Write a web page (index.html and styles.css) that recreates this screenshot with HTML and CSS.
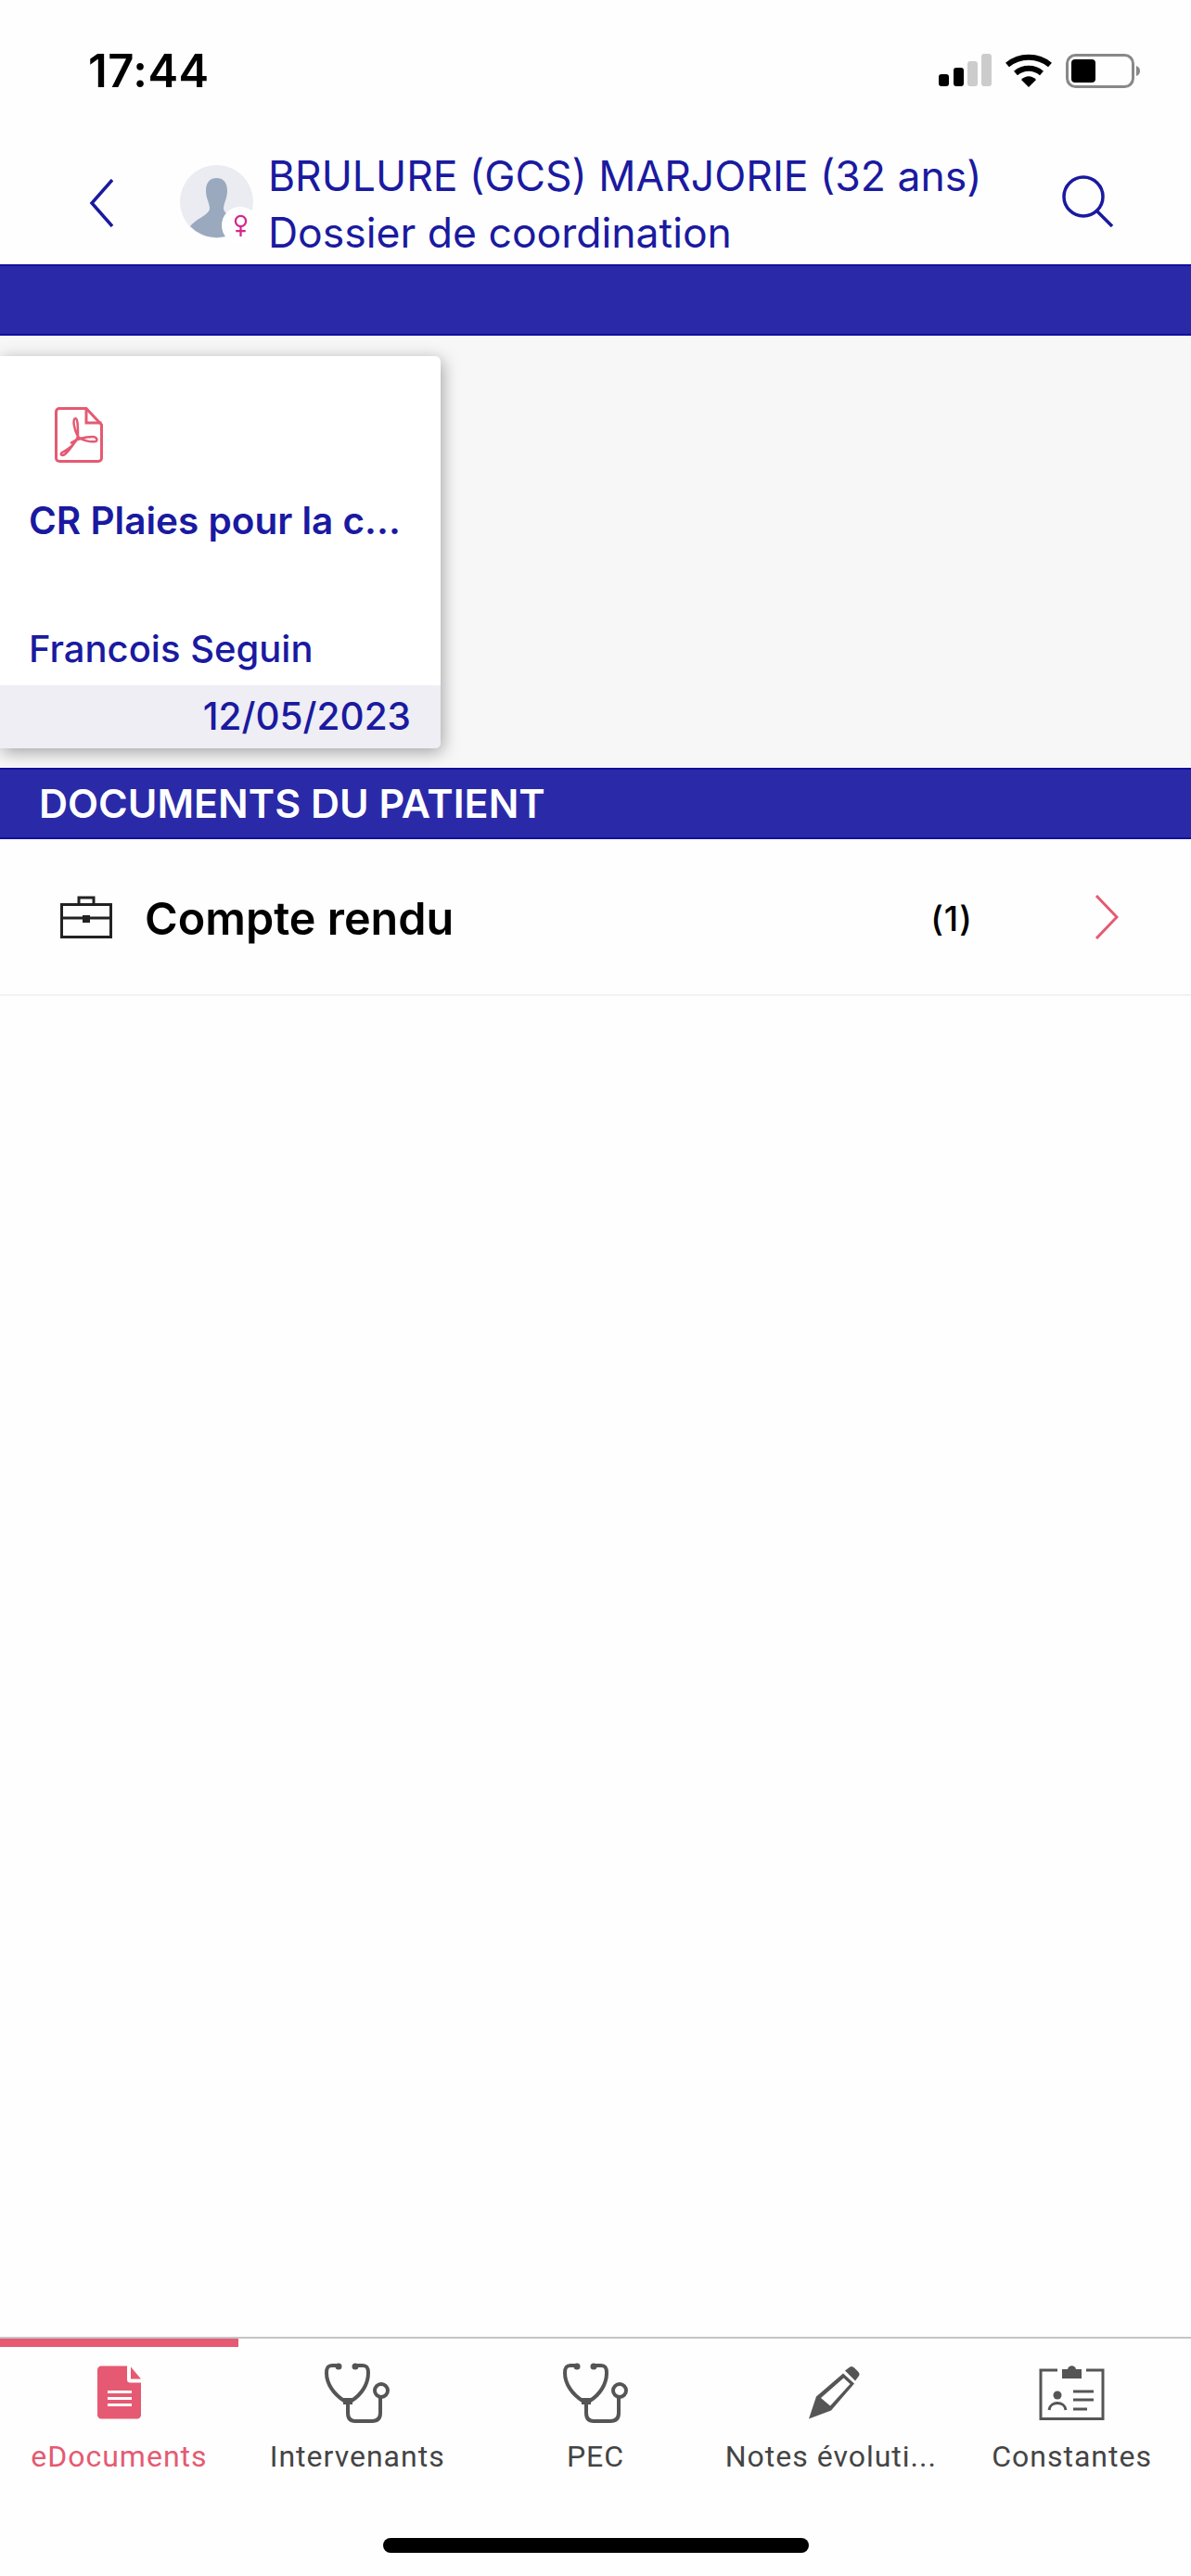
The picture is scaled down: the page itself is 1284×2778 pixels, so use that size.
FILE: index.html
```html
<!DOCTYPE html>
<html lang="fr">
<head>
  <meta charset="UTF-8">
  <title>Dossier de coordination</title>
  <meta name="viewport" content="width=device-width, initial-scale=1">
  <link rel="stylesheet" href="styles.css">
</head>
<body>

<div class="status-bar">
  <span class="time">17:44</span>
  <div class="status-icons">
    <svg class="signal" width="57" height="35" viewBox="0 0 57 35">
      <rect x="0" y="22" width="11" height="13" rx="3" fill="#000"/>
      <rect x="16" y="15" width="11" height="20" rx="3" fill="#000"/>
      <rect x="31" y="8" width="11" height="27" rx="3" fill="#ccc"/>
      <rect x="46" y="0" width="11" height="35" rx="3" fill="#ccc"/>
    </svg>
    <svg class="wifi" width="50" height="36" viewBox="0 0 50 36">
      <path d="M2 12 C15 1 35 1 48 12 M11 21 C19 14 31 14 39 21" fill="none" stroke="#000" stroke-width="6"/>
      <path d="M17 28 C22 23 28 23 33 28 L25 36 Z" fill="#000"/>
    </svg>
    <svg class="battery" width="80" height="37" viewBox="0 0 80 37">
      <rect x="1.500" y="1.500" width="71" height="34" rx="9" fill="none" stroke="#888" stroke-width="3"/>
      <rect x="6" y="6" width="26" height="25" rx="4" fill="#000"/>
      <path d="M76 13 C79 14 80 16 80 18.500 C80 21 79 23 76 24 Z" fill="#888"/>
    </svg>
  </div>
</div>

<header class="top-bar">
  <svg class="back" width="27" height="52" viewBox="0 0 27 52">
    <path d="M25 1 L3 26 L25 51" fill="none" stroke="#1a1aa0" stroke-width="3.500"/>
  </svg>
  <div class="avatar">
    <svg width="79" height="79" viewBox="0 0 79 79">
      <circle cx="39.500" cy="39.500" r="39.500" fill="#ebebf2"/>
      <path d="M28 28 C28 18 33 14 39.500 14 C46 14 51 18 51 28 C51 36 47 41 47 47 C48 54 59 56 68 66 A39.500 39.500 0 0 1 11 66 C20 56 31 54 32 47 C32 41 28 36 28 28 Z" fill="#9aa9bd"/>
    </svg>
    <span class="gender-badge">
      <svg width="15" height="24" viewBox="0 0 20 32">
        <circle cx="10" cy="10" r="7.500" fill="none" stroke="#d6278a" stroke-width="3"/>
        <path d="M10 17 V32 M3 24 H17" fill="none" stroke="#d6278a" stroke-width="3"/>
      </svg>
    </span>
  </div>
  <div class="patient">
    <div class="patient-name">BRULURE (GCS) MARJORIE (32 ans)</div>
    <div class="patient-sub">Dossier de coordination</div>
  </div>
  <svg class="search" width="56" height="56" viewBox="0 0 56 56">
    <circle cx="23" cy="23" r="21" fill="none" stroke="#1a1aa0" stroke-width="3.500"/>
    <path d="M37 38 L54 55" fill="none" stroke="#1a1aa0" stroke-width="3.500"/>
  </svg>
</header>

<div class="band band-empty"></div>

<section class="recent">
  <div class="doc-card">
    <div class="doc-body">
      <svg class="pdf-icon" width="52" height="60" viewBox="0 0 52 60">
        <path d="M5 1.500 H34 L50.500 19 V55 C50.500 57 49 58.500 47 58.500 H5 C3 58.500 1.500 57 1.500 55 V5 C1.500 3 3 1.500 5 1.500 Z" fill="none" stroke="#e55a72" stroke-width="3"/>
        <path d="M34 1.500 V17 H50.500" fill="none" stroke="#e55a72" stroke-width="3"/>
        <path d="M22 12 C19 14 21 24 25 32 C22 40 14 46 8 49 C5 51 8 54 12 50 C16 46 22 38 25 32 C30 36 38 38 44 37 C47 36 45 32 41 32 C36 32 26 33 17 39 M22 12 C25 12 25 20 25 32" fill="none" stroke="#e55a72" stroke-width="2.500"/>
      </svg>
      <div class="doc-title">CR Plaies pour la c...</div>
      <div class="doc-author">Francois Seguin</div>
    </div>
    <div class="doc-date">12/05/2023</div>
  </div>
</section>

<div class="band band-title">DOCUMENTS DU PATIENT</div>

<main class="doc-list">
  <div class="doc-row">
    <svg class="case-icon" width="56" height="46" viewBox="0 0 56 46">
      <path d="M20 9 V2 H36 V9" fill="none" stroke="#222" stroke-width="3"/>
      <rect x="1.500" y="9.500" width="53" height="35" fill="none" stroke="#222" stroke-width="3"/>
      <path d="M1.500 24 H54.500" fill="none" stroke="#222" stroke-width="3"/>
      <rect x="24" y="21" width="8" height="8" fill="#222"/>
    </svg>
    <span class="row-label">Compte rendu</span>
    <span class="row-count">(1)</span>
    <svg class="row-chevron" width="26" height="48" viewBox="0 0 26 48">
      <path d="M2 1 L24 24 L2 47" fill="none" stroke="#e55a72" stroke-width="3"/>
    </svg>
  </div>
</main>

<nav class="tab-bar">
  <div class="tab active">
    <svg width="47" height="57" viewBox="0 0 47 57">
      <path d="M4 0 H32 V14 C32 17 33 18 36 18 H47 V53 C47 55 45 57 43 57 H4 C2 57 0 55 0 53 V4 C0 2 2 0 4 0 Z" fill="#e55a72"/>
      <path d="M36 1 L47 14 H36 Z" fill="#e55a72"/>
      <path d="M11 28 H37 M11 35 H37 M11 42 H37" stroke="#fff" stroke-width="3"/>
    </svg>
    <span class="tab-label">eDocuments</span>
  </div>
  <div class="tab">
    <svg width="70" height="66" viewBox="0 0 70 66">
      <use href="#steth"/>
    </svg>
    <span class="tab-label">Intervenants</span>
  </div>
  <div class="tab">
    <svg width="70" height="66" viewBox="0 0 70 66">
      <use href="#steth"/>
    </svg>
    <span class="tab-label">PEC</span>
  </div>
  <div class="tab">
    <svg width="56" height="57" viewBox="0 0 56 57">
      <path d="M44 2 C46 0 48 0 50 2 L54 6 C56 8 56 10 54 12 L51 16 L40 5 Z" fill="#555"/>
      <path d="M38 8 L50 19 L25 48 L1 57 L9 33 Z" fill="#555"/>
      <path d="M38.500 13 L45.500 19.500 L24 43 L14 34.500 Z" fill="#fff"/>
    </svg>
    <span class="tab-label tab-label-cut">Notes évoluti...</span>
  </div>
  <div class="tab">
    <svg width="71" height="62" viewBox="0 0 71 62">
      <path d="M20 7 H2 V59.500 H69 V7 H51" fill="none" stroke="#555" stroke-width="3"/>
      <path d="M25 16 V6 H31 C32 1 39 1 40 6 H46 V16 Z" fill="#555"/>
      <circle cx="20" cy="34" r="4.500" fill="#555"/>
      <path d="M11 50 C12 40 28 40 29 50" fill="none" stroke="#555" stroke-width="3"/>
      <path d="M37 30 H59 M37 39 H59 M37 49 H52" stroke="#555" stroke-width="3"/>
    </svg>
    <span class="tab-label">Constantes</span>
  </div>
</nav>

<div class="home-area">
  <div class="home-indicator"></div>
</div>

<svg class="defs" width="0" height="0">
  <defs>
    <g id="steth" fill="none" stroke="#555" stroke-width="4">
      <path d="M14 4 H8 C3 4 2 7 2 12 C2 24 10 35 21 42 H29 C40 35 47 24 47 12 C47 7 46 4 41 4 H34"/>
      <circle cx="15" cy="5" r="3.500" fill="#555" stroke="none"/>
      <circle cx="33" cy="5" r="3.500" fill="#555" stroke="none"/>
      <path d="M25 42 V55 C25 61 28 64 33 64 H51 C57 64 60 61 60 55 V38"/>
      <circle cx="61" cy="31" r="7"/>
      <rect x="20" y="39" width="10" height="7" fill="#555" stroke="none"/>
    </g>
  </defs>
</svg>

</body>
</html>
```

FILE: styles.css
```css
* {
  box-sizing: border-box;
  margin: 0;
  padding: 0;
}

body {
  font-family: 'Inter', sans-serif;
  background: #fefefe;
  width: 1284px;
  height: 2778px;
  display: flex;
  flex-direction: column;
  overflow: hidden;
  color: #1a1aa0;
}

.status-bar {
  height: 146px;
  display: flex;
  justify-content: space-between;
  align-items: flex-start;
  padding: 51px 55px 0 95px;
}

.time {
  font-size: 49px;
  font-weight: 600;
  line-height: 52px;
  letter-spacing: 0.5px;
  color: #000;
}

.status-icons {
  display: flex;
  align-items: flex-start;
  padding-top: 7px;
  gap: 15px;
}

.top-bar {
  height: 139px;
  display: flex;
  align-items: flex-start;
  position: relative;
  padding-left: 96px;
}

.back {
  margin-top: 47px;
}

.avatar {
  position: relative;
  width: 79px;
  height: 79px;
  margin: 32px 16px 0 71px;
}

.gender-badge {
  position: absolute;
  left: 45px;
  top: 45px;
  width: 40px;
  height: 40px;
  border-radius: 50%;
  background: #fff;
  display: flex;
  align-items: center;
  justify-content: center;
}

.patient {
  flex: 1;
  padding-top: 14px;
  font-size: 44.500px;
  line-height: 61px;
}

.search {
  margin: 43px 83px 0 0;
}

.band {
  background: #2a2aa8;
  border-top: 2px solid #10109c;
  border-bottom: 2px solid #10109c;
}

.band-empty {
  height: 77px;
}

.recent {
  height: 466px;
  background: #f7f7f7;
  padding-top: 22px;
}

.doc-card {
  width: 475px;
  height: 423px;
  background: #fff;
  border-radius: 0 6px 6px 0;
  box-shadow: 2px 4px 18px rgba(0, 0, 0, 0.35);
  display: flex;
  flex-direction: column;
  overflow: hidden;
}

.doc-body {
  flex: 1;
  padding: 55px 31px 0;
}

.pdf-icon {
  display: block;
  margin-left: 28px;
}

.doc-title {
  margin-top: 33px;
  font-size: 40.500px;
  font-weight: 600;
  line-height: 60px;
  white-space: nowrap;
}

.doc-author {
  margin-top: 78px;
  font-size: 40px;
  font-weight: 500;
  line-height: 60px;
}

.doc-date {
  height: 68px;
  background: #eeeef4;
  text-align: right;
  padding-right: 32px;
  font-size: 40.500px;
  font-weight: 500;
  line-height: 68px;
}

.band-title {
  height: 77px;
  padding-left: 42px;
  color: #fff;
  font-size: 43px;
  font-weight: 600;
  line-height: 73px;
}

.doc-list {
  flex: 1;
}

.doc-row {
  height: 169px;
  border-bottom: 2px solid #f2f2f2;
  display: flex;
  align-items: center;
  padding: 0 78px 0 65px;
  color: #000;
}

.row-label {
  flex: 1;
  margin: 3px 0 0 35px;
  font-size: 48.500px;
  font-weight: 600;
}

.row-count {
  font-size: 37px;
  font-weight: 500;
  letter-spacing: 1px;
  margin: 3px 131px 0 0;
}

.tab-bar {
  height: 170px;
  display: flex;
  border-top: 2px solid #c4c4c4;
}

.tab {
  width: 20%;
  height: 168px;
  display: flex;
  flex-direction: column;
  align-items: center;
  position: relative;
  padding-top: 25px;
  color: #444;
}

.tab svg {
  display: block;
  height: 66px;
}

.tab.active {
  color: #e55a72;
}

.tab.active::before {
  content: "";
  position: absolute;
  left: 0;
  right: 0;
  top: 0;
  height: 9px;
  background: #e55a72;
}

.tab-label {
  margin-top: 18px;
  font-family: 'Roboto', sans-serif;
  font-size: 32px;
  line-height: 36px;
  letter-spacing: 1px;
  white-space: nowrap;
}

.tab-label-cut {
  margin-right: 6px;
}

.home-area {
  height: 88px;
  padding-top: 47px;
}

.home-indicator {
  width: 459px;
  height: 16px;
  margin: 0 auto;
  border-radius: 8px;
  background: #000;
}

.defs {
  position: absolute;
}
```
